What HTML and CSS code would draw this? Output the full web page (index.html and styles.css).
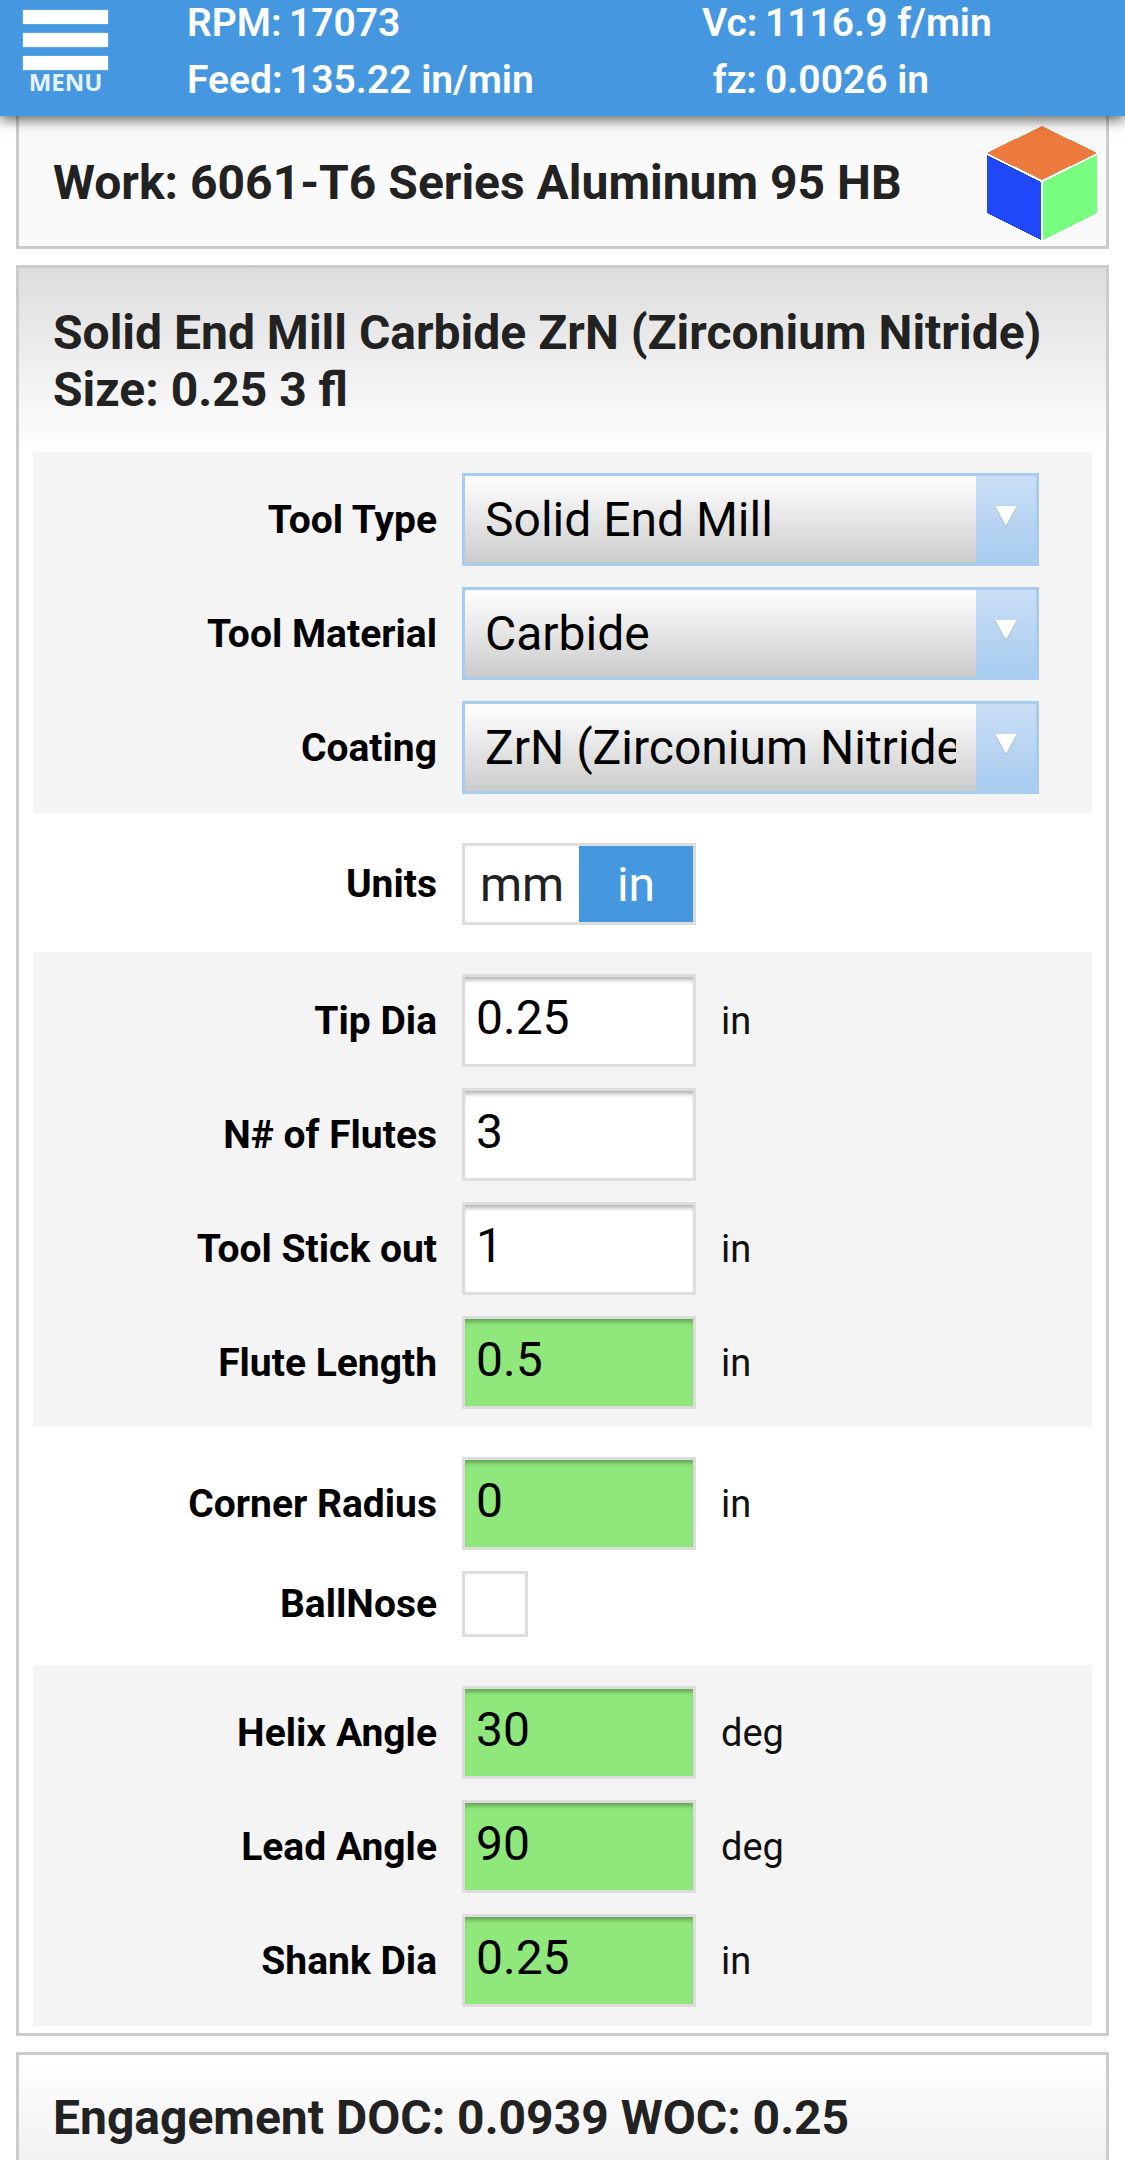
FILE: index.html
```html
<!DOCTYPE html>
<html lang="en">
<head>
  <meta charset="UTF-8" />
  <meta name="viewport" content="width=device-width, initial-scale=1.0"/>
  <title>Speeds and Feeds</title>
  <link rel="stylesheet" href="styles.css">
</head>

<body>
  <header class="topbar">
    <button class="menu-btn" type="button">
      <span class="menu-bar"></span>
      <span class="menu-bar"></span>
      <span class="menu-bar"></span>
      <span class="menu-word">MENU</span>
    </button>
    <div class="readout readout-left">
      <span class="key">RPM:</span><span>17073</span>
      <span class="key">Feed:</span><span>135.22 in/min</span>
    </div>
    <div class="readout readout-right">
      <span class="key">Vc:</span><span>1116.9 f/min</span>
      <span class="key">fz:</span><span>0.0026 in</span>
    </div>
  </header>

  <section class="card card-work">
    <h2 class="card-title">Work: 6061-T6 Series Aluminum 95 HB</h2>
    <svg class="cube" width="110" height="114" viewBox="0 0 110 114" shape-rendering="crispEdges">
      <polygon points="55,0 110,27 55,54 0,27" fill="#ee7b3e"/>
      <polygon points="0,29 54,56 54,114 0,87" fill="#2048f8"/>
      <polygon points="56,56 110,29 110,87 56,114" fill="#78ff80"/>
    </svg>
  </section>

  <section class="card card-tool">
    <h2 class="card-title card-head">Solid End Mill Carbide ZrN (Zirconium Nitride)<br>Size: 0.25 3 fl</h2>

    <div class="panel">
      <div class="row">
        <label class="row-label">Tool Type</label>
        <div class="picker">
          <select class="picker-select"><option>Solid End Mill</option></select>
          <span class="picker-btn"><span class="picker-arrow"></span></span>
        </div>
      </div>
      <div class="row">
        <label class="row-label">Tool Material</label>
        <div class="picker">
          <select class="picker-select"><option>Carbide</option></select>
          <span class="picker-btn"><span class="picker-arrow"></span></span>
        </div>
      </div>
      <div class="row">
        <label class="row-label">Coating</label>
        <div class="picker">
          <select class="picker-select"><option>ZrN (Zirconium Nitride)</option></select>
          <span class="picker-btn"><span class="picker-arrow"></span></span>
        </div>
      </div>
    </div>

    <div class="plain plain-units">
      <div class="row">
        <label class="row-label">Units</label>
        <div class="toggle">
          <span class="toggle-opt">mm</span>
          <span class="toggle-opt on">in</span>
        </div>
      </div>
    </div>

    <div class="panel panel-sizes">
      <div class="row">
        <label class="row-label">Tip Dia</label>
        <input class="num" value="0.25">
        <span class="unit">in</span>
      </div>
      <div class="row">
        <label class="row-label">N# of Flutes</label>
        <input class="num" value="3">
      </div>
      <div class="row">
        <label class="row-label">Tool Stick out</label>
        <input class="num" value="1">
        <span class="unit">in</span>
      </div>
      <div class="row">
        <label class="row-label">Flute Length</label>
        <input class="num auto" value="0.5">
        <span class="unit">in</span>
      </div>
    </div>

    <div class="plain plain-corner">
      <div class="row">
        <label class="row-label">Corner Radius</label>
        <input class="num auto" value="0">
        <span class="unit">in</span>
      </div>
      <div class="row">
        <label class="row-label">BallNose</label>
        <span class="check"></span>
      </div>
    </div>

    <div class="panel">
      <div class="row">
        <label class="row-label">Helix Angle</label>
        <input class="num auto" value="30">
        <span class="unit">deg</span>
      </div>
      <div class="row">
        <label class="row-label">Lead Angle</label>
        <input class="num auto" value="90">
        <span class="unit">deg</span>
      </div>
      <div class="row">
        <label class="row-label">Shank Dia</label>
        <input class="num auto" value="0.25">
        <span class="unit">in</span>
      </div>
    </div>
  </section>

  <section class="card card-engage">
    <h2 class="card-title">Engagement DOC: 0.0939 WOC: 0.25</h2>
  </section>
</body>
</html>
```

FILE: styles.css
```css
* { box-sizing: border-box; }
html, body {
  margin: 0;
  height: 2160px;
  overflow: hidden;
  background: white;
  font-family: Roboto, 'Liberation Sans', sans-serif;
}

/* top bar */
.topbar {
  position: relative;
  z-index: 5;
  display: flex;
  height: 116px;
  background: #4598e0;
  color: white;
  font-size: 39px;
  font-weight: 600;
  box-shadow: 0 4px 12px rgba(0,0,0,0.6);
}
.menu-btn {
  display: flex;
  flex-direction: column;
  align-items: center;
  width: 187px;
  padding: 10px 79px 0 23px;
  background: none;
  border: 0;
}
.menu-bar {
  flex: none;
  width: 85px;
  height: 14px;
  margin-bottom: 9px;
  background: white;
  box-shadow: 0 0 1px #cfe4f7;
}
.menu-word {
  margin-top: -10px;
  font-family: 'Open Sans', sans-serif;
  font-size: 24px;
  font-weight: 700;
  line-height: 26px;
  color: #e6f2fb;
}
.readout {
  display: grid;
  grid-template-rows: 57px 57px;
  align-items: center;
  column-gap: 8px;
  line-height: 57px;
  margin-top: -5px;
}
.readout-left { grid-template-columns: 94px 413px; }
.readout-right { grid-template-columns: 55px auto; }
.key { text-align: right; }

/* cards */
.card {
  margin: 0 16px 16px;
  border: 3px solid #ccc;
  color: #222;
}
.card-title {
  margin: 0;
  font-size: 48px;
  font-weight: 700;
  line-height: 57px;
}
.card-work {
  display: flex;
  justify-content: space-between;
  align-items: center;
  height: 133px;
  padding: 0 9px 0 34px;
  border-top: 0;
  background: #fafafa;
}
.card-work .card-title { margin-top: 3px; }
.cube { margin-top: 4px; }
.card-tool { padding: 0 14px 7px; }
.card-head {
  margin: 0 -14px;
  padding: 36px 34px 34px;
  background: linear-gradient(#ddd, #fff);
}
.card-engage {
  padding: 34px;
  background: linear-gradient(#fff, #eee);
}

/* form rows */
.panel {
  display: flex;
  flex-direction: column;
  gap: 21px;
  padding: 21px 0 19px;
  background: #f4f4f4;
}
.panel-sizes { padding: 22px 0 18px; }
.plain {
  display: flex;
  flex-direction: column;
  gap: 21px;
}
.plain-units { padding: 30px 0 27px; }
.plain-corner { padding: 30px 0 28px; }
.row {
  display: grid;
  grid-template-columns: 404px 234px auto;
  column-gap: 25px;
  align-items: center;
}
.row-label {
  font-size: 39px;
  font-weight: 700;
  color: black;
  text-align: right;
}
.unit {
  font-size: 38px;
  color: #111;
}

/* select */
.picker {
  grid-column: 2 / 4;
  display: flex;
  width: 577px;
  height: 93px;
  border: 3px solid #a8ccef;
}
.picker-select {
  flex: 1;
  min-width: 0;
  height: 100%;
  padding: 0 20px;
  appearance: none;
  border: 0;
  border-radius: 0;
  background: linear-gradient(#fff, #ccc);
  color: black;
  font-family: inherit;
  font-size: 48px;
}
.picker-btn {
  display: flex;
  justify-content: center;
  padding-top: 30px;
  flex: none;
  width: 60px;
  background: linear-gradient(#c9def5, #a8ccef);
}
.picker-arrow {
  width: 0;
  height: 0;
  border-left: 11px solid transparent;
  border-right: 11px solid transparent;
  border-top: 20px solid white;
  filter: drop-shadow(0 1px 0 #8aa);
}

/* units toggle */
.toggle {
  display: flex;
  height: 82px;
  border: 3px solid #ddd;
  background: white;
  font-size: 48px;
}
.toggle-opt {
  flex: 1;
  display: flex;
  align-items: center;
  justify-content: center;
}
.toggle-opt.on {
  background: #4598e0;
  color: white;
}

/* number inputs */
.num {
  width: 234px;
  height: 93px;
  padding: 0 11px 6px;
  border: 3px solid #ddd;
  border-radius: 0;
  background: white;
  box-shadow: inset 0 5px 4px -2px rgba(0,0,0,0.3);
  color: black;
  font-family: inherit;
  font-size: 48px;
  outline: 0;
}
.num.auto { background: #90e87c; }
.check {
  width: 66px;
  height: 66px;
  border: 3px solid #ddd;
  background: white;
}
```
